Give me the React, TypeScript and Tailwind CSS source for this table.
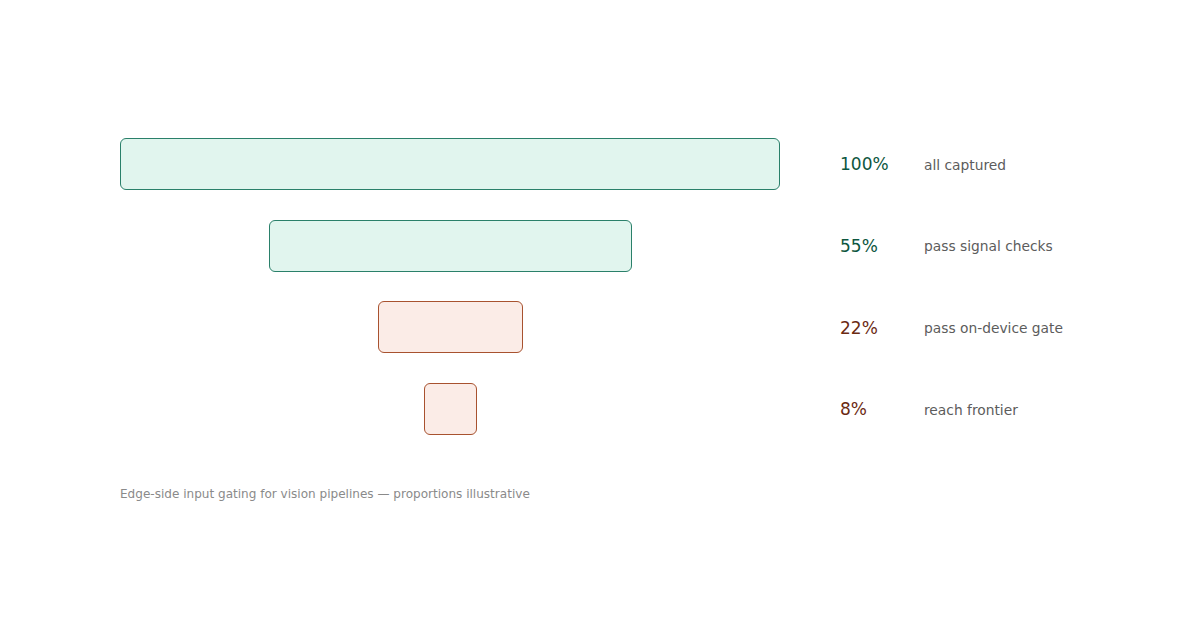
import React from "react";

const rows = [
  { pct: 100, label: "all captured", tone: "green" },
  { pct: 55, label: "pass signal checks", tone: "green" },
  { pct: 22, label: "pass on-device gate", tone: "brown" },
  { pct: 8, label: "reach frontier", tone: "brown" },
];

export default function App() {
  return (
    <div
      className="w-[1200px] h-[628px] bg-white pt-[138px] pl-[120px]"
      style={{ fontFamily: '"DejaVu Sans", sans-serif' }}
    >
      <div className="flex flex-col gap-[29.7px]">
        {rows.map((r) => (
          <div key={r.label} className="flex items-center h-[52px]">
            <div className="w-[660px] h-full flex justify-center">
              <div
                className={
                  r.tone === "green"
                    ? "h-full rounded-[6px] border border-[#2a806a] bg-[#e1f5ee]"
                    : "h-full rounded-[6px] border border-[#a8522f] bg-[#fbece7]"
                }
                style={{ width: `${Math.round((660 * r.pct) / 100)}px` }}
              />
            </div>
            <div
              className={
                r.tone === "green"
                  ? "ml-[60px] w-[84px] pt-[2px] text-[17px] text-[#0d5640]"
                  : "ml-[60px] w-[84px] pt-[2px] text-[17px] text-[#6b2a12]"
              }
            >
              {r.pct}%
            </div>
            <div className="pt-[2px] text-[13.8px] text-[#5c5c5c]">{r.label}</div>
          </div>
        ))}
      </div>
      <div className="mt-[52px] text-[12.05px] leading-[14px] text-[#8a8a8a]">
        Edge-side input gating for vision pipelines — proportions illustrative
      </div>
    </div>
  );
}
